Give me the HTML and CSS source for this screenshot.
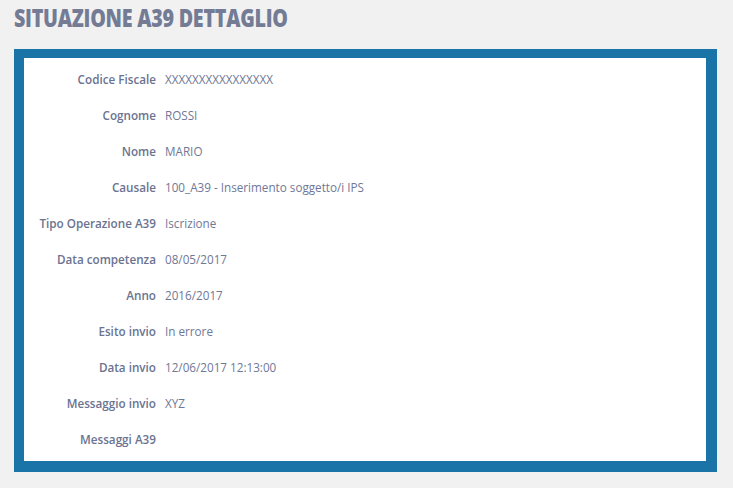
FILE: index.html
```html
<!DOCTYPE html>
<html lang="it">
<head>
    <meta charset="UTF-8">
    <title>Situazione A39 dettaglio</title>
    <link rel="stylesheet" href="styles.css">
</head>
<body>
    <h1 class="page-title"><span>SITUAZIONE A39 DETTAGLIO</span></h1>

    <div class="detail-box">
        <dl class="detail-list">
            <div class="row"><dt>Codice Fiscale</dt><dd>XXXXXXXXXXXXXXXX</dd></div>
            <div class="row"><dt>Cognome</dt><dd>ROSSI</dd></div>
            <div class="row"><dt>Nome</dt><dd>MARIO</dd></div>
            <div class="row"><dt>Causale</dt><dd>100_A39 - Inserimento soggetto/i IPS</dd></div>
            <div class="row"><dt>Tipo Operazione A39</dt><dd>Iscrizione</dd></div>
            <div class="row"><dt>Data competenza</dt><dd>08/05/2017</dd></div>
            <div class="row"><dt>Anno</dt><dd>2016/2017</dd></div>
            <div class="row"><dt>Esito invio</dt><dd>In errore</dd></div>
            <div class="row"><dt>Data invio</dt><dd>12/06/2017 12:13:00</dd></div>
            <div class="row"><dt>Messaggio invio</dt><dd>XYZ</dd></div>
            <div class="row"><dt>Messaggi A39</dt><dd></dd></div>
        </dl>
    </div>
</body>
</html>
```

FILE: styles.css
```css
body {
    font-family: 'Open Sans', sans-serif;
    margin: 0;
    padding: 0 16px 0 14px;
    background: #f1f1f1;
    color: #6e7794;
}
.page-title {
    margin: 0;
    padding-top: 1px;
    height: 48px;
    font-size: 24px;
    line-height: 33px;
    font-weight: 800;
    color: #737b95;
}
.page-title span {
    display: inline-block;
    transform: scaleX(0.82);
    transform-origin: left center;
    letter-spacing: -0.3px;
}
.detail-box {
    background: #fff;
    border-style: solid;
    border-color: #1b74a7;
    border-width: 9px 11px 11px 10px;
    padding: 3px 0 4px;
}
.detail-list {
    margin: 0;
}
.row {
    display: flex;
    align-items: center;
    height: 36px;
    font-size: 11.7px;
}
.row dt {
    width: 132px;
    text-align: right;
    font-weight: 600;
    color: #6b7390;
}
.row dd {
    margin: 0 0 0 9px;
    color: #6f7896;
}
```
